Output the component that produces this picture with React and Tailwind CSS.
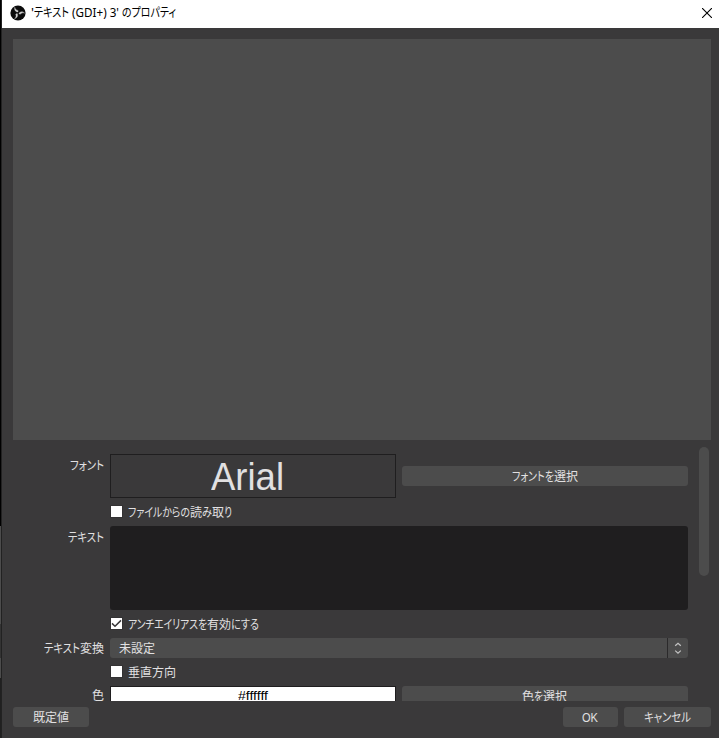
import { useLayoutEffect, useRef } from "react";

// Condenses a run of text horizontally so that it fills the given width.
function Run({ t, w }) {
  const ref = useRef(null);
  useLayoutEffect(() => {
    const el = ref.current;
    const fit = () => {
      el.style.transform = "none";
      el.style.transform = `scaleX(${w / el.getBoundingClientRect().width})`;
    };
    fit();
    document.fonts.ready.then(fit);
  }, [t, w]);
  return (
    <span className="inline-block shrink-0" style={{ width: w }}>
      <span ref={ref} className="inline-block origin-left whitespace-pre [font-feature-settings:'palt']">{t}</span>
    </span>
  );
}

function Text({ runs, className = "" }) {
  return (
    <span className={"flex shrink-0 whitespace-nowrap " + className}>
      {runs.map(([t, w], i) => <Run key={i} t={t} w={w} />)}
    </span>
  );
}

function Button({ runs, className }) {
  return (
    <button className={"flex h-5 items-center justify-center rounded-[3px] bg-[#4c4c4c] pt-px pr-px " + className}>
      <Text runs={runs} />
    </button>
  );
}

function Check({ checked, runs }) {
  return (
    <label className="flex h-[14px] items-center">
      <span className="mr-[5px] mb-px flex size-[13px] items-center justify-center border border-[#333233] bg-white">
        {checked && (
          <svg viewBox="0 0 11 11" className="size-[11px]" fill="none" stroke="#3a393a" strokeWidth="1.5">
            <path d="M1 5.4 4 8.2 10 2.4" />
          </svg>
        )}
      </span>
      <Text className="pt-px" runs={runs} />
    </label>
  );
}

function Label({ runs, className = "" }) {
  return (
    <div className={"flex w-[102px] shrink-0 justify-end pr-[7px] " + className}>
      <Text runs={runs} />
    </div>
  );
}

const blade = "M8.2 7C6 7.2 3.9 5.4 4.8 2.2C5.2 4.2 6.4 5.2 8.2 5.4";

export default function App() {
  return (
    <div className="flex h-[738px] w-[719px] overflow-hidden bg-[#3a393a] font-['Liberation_Sans','Noto_Sans_CJK_JP',sans-serif] text-[12.5px] leading-[14px] text-[#e1e0e1]">
      <div className="flex w-px shrink-0 flex-col bg-[#202020]">
        <div className="h-[526px] bg-black" />
        <div className="h-[98px] bg-[#4c4c4c]" />
        <div className="h-[34px] bg-[#333333]" />
        <div className="h-5 bg-[#4c4c4c]" />
      </div>
      <div className="w-px shrink-0 bg-[#222222]" />
      <div className="flex w-[717px] flex-col">
        <header className="flex h-7 shrink-0 items-center bg-white pr-[7px] pb-[3px] pl-[8px] text-black">
          <svg viewBox="0 0 16 16" className="mr-[5px] size-4">
            <circle cx="8" cy="8" r="7.6" fill="#0b0b0b" />
            <g fill="#d0d0d0" stroke="#d0d0d0" strokeWidth="0.3">
              <path d={blade} />
              <path d={blade} transform="rotate(120 8 8)" />
              <path d={blade} transform="rotate(240 8 8)" />
            </g>
          </svg>
          <Text
            runs={[["'", 3], ["テキスト", 35], [" (GDI+) 3' ", 53], ["のプロパティ", 54]]}
            className="pt-px font-['Noto_Sans','Noto_Sans_CJK_JP',sans-serif]"
          />
          <svg viewBox="0 0 10 10" className="ml-auto size-[10px]" stroke="#000" strokeWidth="1.1">
            <path d="M0 0 10 10M10 0 0 10" />
          </svg>
        </header>
        <main className="flex min-h-0 grow flex-col pt-[11px] pl-[11px]">
          <div className="h-[401px] w-[698px] shrink-0 bg-[#4c4c4c]" />
          <section className="mt-[7px] -ml-[4px] flex h-[254px] shrink-0 overflow-hidden">
            <div className="w-[679px] shrink-0 pt-[7px]">
              <div className="flex h-11">
                <Label className="pt-[5px]" runs={[["フォント", 34]]} />
                <div className="ml-[-1px] flex h-11 w-[286px] items-center justify-center border border-[#1f1e1f] pt-px pr-[11px] text-[38px] leading-none">
                  <Text runs={[["Arial", 73]]} />
                </div>
                <Button className="mt-3 ml-[6px] w-[286px]" runs={[["フォントを", 42], ["選択", 24]]} />
              </div>
              <div className="mt-[7px] ml-[101px]">
                <Check runs={[["ファイルからの", 62], ["読", 12], ["み", 10], ["取", 12], ["り", 8]]} />
              </div>
              <div className="mt-[7px] flex">
                <Label className="pt-[5px]" runs={[["テキスト", 36]]} />
                <div className="ml-[-1px] h-[84px] w-[578px] rounded-[3px] bg-[#1f1e1f]" />
              </div>
              <div className="mt-[7px] ml-[101px]">
                <Check checked runs={[["アンチエイリアスを", 79], ["有効", 24], ["にする", 28]]} />
              </div>
              <div className="mt-[7px] flex items-center">
                <Label className="pt-px" runs={[["テキスト", 36], ["変換", 24]]} />
                <div className="ml-[-1px] flex h-5 w-[578px] items-center rounded-[3px] bg-[#4c4c4c] pl-[9px]">
                  <Text className="pt-px" runs={[["未設定", 36]]} />
                  <div className="ml-auto flex h-5 w-[21px] items-center justify-center border-l border-[#2b2a2b]">
                    <svg viewBox="0 0 8 14" className="h-[14px] w-2" fill="none" stroke="#c4c4c4" strokeWidth="1.2">
                      <path d="M1.2 4.8 4 2.2 6.8 4.8M1.2 9.6 4 12.2 6.8 9.6" />
                    </svg>
                  </div>
                </div>
              </div>
              <div className="mt-[7px] ml-[101px]">
                <Check runs={[["垂直方向", 48]]} />
              </div>
              <div className="mt-[7px] flex">
                <Label className="pt-[3px]" runs={[["色", 12]]} />
                <div className="ml-[-1px] flex h-5 w-[286px] items-center justify-center border border-[#1f1e1f] bg-white pr-px text-black">
                  <Text runs={[["#ffffff", 30]]} />
                </div>
                <Button className="ml-[6px] w-[286px] pr-[3px]" runs={[["色", 12], ["を", 9], ["選択", 24]]} />
              </div>
            </div>
            <div className="ml-[11px] h-[129px] w-[10px] rounded-full bg-[#4c4c4c]" />
          </section>
          <footer className="mt-[6px] flex w-[698px]">
            <Button className="w-[76px]" runs={[["既定値", 36]]} />
            <Button className="ml-auto w-[55px]" runs={[["OK", 16]]} />
            <Button className="ml-[6px] w-[87px]" runs={[["キャンセル", 47]]} />
          </footer>
        </main>
      </div>
    </div>
  );
}
